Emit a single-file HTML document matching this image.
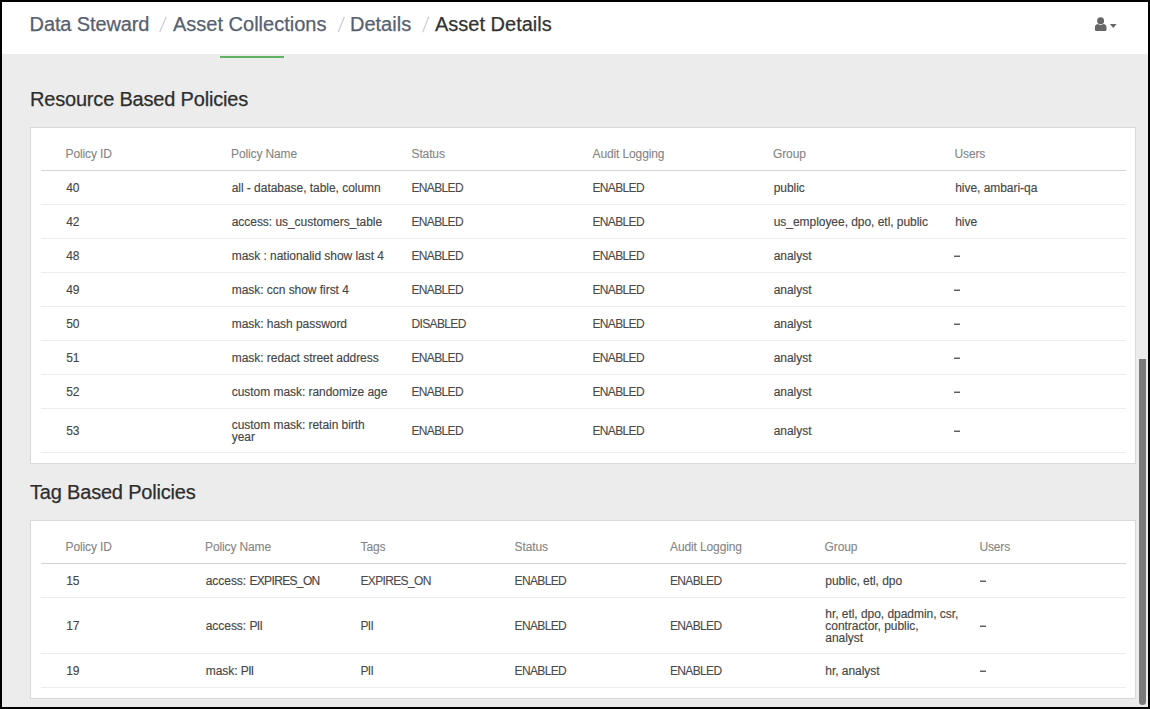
<!DOCTYPE html>
<html><head><meta charset="utf-8">
<style>
html,body{margin:0;padding:0;width:1150px;height:709px;overflow:hidden;background:#000;}
body{position:relative;font-family:"Liberation Sans",sans-serif;}
#frame{position:absolute;left:2px;top:2px;width:1146px;height:705px;background:#ececec;overflow:hidden;}
#hdr{position:absolute;left:2px;top:2px;width:1146px;height:52px;background:#fff;}
.bc{position:absolute;top:0;font-size:20px;line-height:20px;white-space:pre;color:#576070;-webkit-text-stroke:0.25px currentColor;}
.sl{position:absolute;top:0;font-size:20px;line-height:20px;color:#c4c7cc;}
#green{position:absolute;left:220px;top:56px;width:64px;height:2px;background:#62b266;}
.title{position:absolute;font-size:20px;line-height:20px;color:#2e2e2e;white-space:pre;letter-spacing:-0.19px;-webkit-text-stroke:0.25px currentColor;}
.card{position:absolute;left:30px;width:1104px;background:#fff;border:1px solid #d7d9dc;}
.th,.td{position:absolute;font-size:12px;line-height:12px;white-space:pre;}
.th{color:#858585;letter-spacing:-0.12px;-webkit-text-stroke:0.1px currentColor;}
.td{color:#464646;letter-spacing:-0.04px;-webkit-text-stroke:0.15px currentColor;}
.capw{letter-spacing:-0.65px;}
.cap{letter-spacing:-0.65px;color:#4a4a4a;-webkit-text-stroke:0.1px currentColor;}
.hl{position:absolute;left:41px;width:1085px;height:1px;background:#d4d4d4;}
.rl{position:absolute;left:41px;width:1085px;height:1px;background:#ededed;}
.dash{position:absolute;width:6px;height:2px;background:linear-gradient(#b4b4b4 50%,#606060 50%);}
#thumb{position:absolute;left:1139px;top:359px;width:7px;height:346px;background:#7a7a7a;border-radius:0 0 3.5px 3.5px;}
</style></head><body>
<div id="frame"></div>
<div id="hdr"></div>
<div class="bc" style="left:29.6px;top:14px;letter-spacing:-0.12px">Data Steward</div>
<div class="bc" style="left:173px;top:14px">Asset Collections</div>
<div class="bc" style="left:350px;top:14px">Details</div>
<div class="bc" style="left:435px;top:14px;color:#333">Asset Details</div>
<svg style="position:absolute;left:0;top:0" width="600" height="54">
<g stroke="#c9ccd1" stroke-width="1.2">
<line x1="166.3" y1="16.8" x2="159.7" y2="32.2"/>
<line x1="344.4" y1="16.8" x2="338.2" y2="32.2"/>
<line x1="428.8" y1="16.8" x2="422.7" y2="32.2"/>
</g></svg>
<svg style="position:absolute;left:1092px;top:15px" width="28" height="20" viewBox="0 0 28 20">
<path d="M2.9 14.6 L2.9 12.4 Q2.9 9 6.4 8.9 L11 8.9 Q14.5 9 14.5 12.4 L14.5 14.6 Q14.5 16.1 13.0 16.1 L4.4 16.1 Q2.9 16.1 2.9 14.6Z" fill="#666"/>
<circle cx="8.6" cy="5.8" r="4.1" fill="#fff"/>
<circle cx="8.6" cy="5.8" r="3.5" fill="#666"/>
<path d="M17.9 9 L24.6 9 L21.25 12.9 Z" fill="#666"/>
</svg>
<div id="green"></div>
<div class="title" style="left:30px;top:89px">Resource Based Policies</div>
<div class="title" style="left:30px;top:482px">Tag Based Policies</div>
<div class="card" style="top:127px;height:335px"></div>
<div class="card" style="top:520px;height:177px"></div>
<div class="th" style="left:65.5px;top:148px">Policy ID</div>
<div class="th" style="left:231px;top:148px">Policy Name</div>
<div class="th" style="left:411.5px;top:148px">Status</div>
<div class="th" style="left:592.5px;top:148px">Audit Logging</div>
<div class="th" style="left:773px;top:148px">Group</div>
<div class="th" style="left:954.5px;top:148px">Users</div>
<div class="hl" style="top:170px"></div>
<div class="td" style="left:66.2px;top:182.0px">40</div>
<div class="td" style="left:231.7px;top:182.0px">all - database, table, column</div>
<div class="td cap" style="left:411.5px;top:182.0px">ENABLED</div>
<div class="td cap" style="left:592.5px;top:182.0px">ENABLED</div>
<div class="td" style="left:773.7px;top:182.0px">public</div>
<div class="td" style="left:955.2px;top:182.0px">hive, ambari-qa</div>
<div class="rl" style="top:204px"></div>
<div class="td" style="left:66.2px;top:216.0px">42</div>
<div class="td" style="left:231.7px;top:216.0px">access: us_customers_table</div>
<div class="td cap" style="left:411.5px;top:216.0px">ENABLED</div>
<div class="td cap" style="left:592.5px;top:216.0px">ENABLED</div>
<div class="td" style="left:773.7px;top:216.0px">us_employee, dpo, etl, public</div>
<div class="td" style="left:955.2px;top:216.0px">hive</div>
<div class="rl" style="top:238px"></div>
<div class="td" style="left:66.2px;top:250.0px">48</div>
<div class="td" style="left:231.7px;top:250.0px">mask : nationalid show last 4</div>
<div class="td cap" style="left:411.5px;top:250.0px">ENABLED</div>
<div class="td cap" style="left:592.5px;top:250.0px">ENABLED</div>
<div class="td" style="left:773.7px;top:250.0px">analyst</div>
<div class="dash" style="left:954px;top:255px"></div>
<div class="rl" style="top:272px"></div>
<div class="td" style="left:66.2px;top:284.0px">49</div>
<div class="td" style="left:231.7px;top:284.0px">mask: ccn show first 4</div>
<div class="td cap" style="left:411.5px;top:284.0px">ENABLED</div>
<div class="td cap" style="left:592.5px;top:284.0px">ENABLED</div>
<div class="td" style="left:773.7px;top:284.0px">analyst</div>
<div class="dash" style="left:954px;top:289px"></div>
<div class="rl" style="top:306px"></div>
<div class="td" style="left:66.2px;top:318.0px">50</div>
<div class="td" style="left:231.7px;top:318.0px">mask: hash password</div>
<div class="td cap" style="left:411.5px;top:318.0px">DISABLED</div>
<div class="td cap" style="left:592.5px;top:318.0px">ENABLED</div>
<div class="td" style="left:773.7px;top:318.0px">analyst</div>
<div class="dash" style="left:954px;top:323px"></div>
<div class="rl" style="top:340px"></div>
<div class="td" style="left:66.2px;top:352.0px">51</div>
<div class="td" style="left:231.7px;top:352.0px">mask: redact street address</div>
<div class="td cap" style="left:411.5px;top:352.0px">ENABLED</div>
<div class="td cap" style="left:592.5px;top:352.0px">ENABLED</div>
<div class="td" style="left:773.7px;top:352.0px">analyst</div>
<div class="dash" style="left:954px;top:357px"></div>
<div class="rl" style="top:374px"></div>
<div class="td" style="left:66.2px;top:386.0px">52</div>
<div class="td" style="left:231.7px;top:386.0px">custom mask: randomize age</div>
<div class="td cap" style="left:411.5px;top:386.0px">ENABLED</div>
<div class="td cap" style="left:592.5px;top:386.0px">ENABLED</div>
<div class="td" style="left:773.7px;top:386.0px">analyst</div>
<div class="dash" style="left:954px;top:391px"></div>
<div class="rl" style="top:408px"></div>
<div class="td" style="left:66.2px;top:425.0px">53</div>
<div class="td" style="left:231.7px;top:418.5px">custom mask: retain birth<br>year</div>
<div class="td cap" style="left:411.5px;top:425.0px">ENABLED</div>
<div class="td cap" style="left:592.5px;top:425.0px">ENABLED</div>
<div class="td" style="left:773.7px;top:425.0px">analyst</div>
<div class="dash" style="left:954px;top:430px"></div>
<div class="rl" style="top:452px"></div>
<div class="th" style="left:65.5px;top:541px">Policy ID</div>
<div class="th" style="left:205px;top:541px">Policy Name</div>
<div class="th" style="left:360.5px;top:541px">Tags</div>
<div class="th" style="left:514.6px;top:541px">Status</div>
<div class="th" style="left:670px;top:541px">Audit Logging</div>
<div class="th" style="left:824.6px;top:541px">Group</div>
<div class="th" style="left:979.4px;top:541px">Users</div>
<div class="hl" style="top:563px"></div>
<div class="td" style="left:66.2px;top:575.0px">15</div>
<div class="td" style="left:205.7px;top:575.0px">access: <span class="capw">EXPIRES_ON</span></div>
<div class="td cap" style="left:360.5px;top:575.0px">EXPIRES_ON</div>
<div class="td cap" style="left:514.6px;top:575.0px">ENABLED</div>
<div class="td cap" style="left:670px;top:575.0px">ENABLED</div>
<div class="td" style="left:825.3px;top:575.0px">public, etl, dpo</div>
<div class="dash" style="left:980px;top:580px"></div>
<div class="rl" style="top:597px"></div>
<div class="td" style="left:66.2px;top:620.0px">17</div>
<div class="td" style="left:205.7px;top:620.0px">access: <span class="capw">PII</span></div>
<div class="td cap" style="left:360.5px;top:620.0px">PII</div>
<div class="td cap" style="left:514.6px;top:620.0px">ENABLED</div>
<div class="td cap" style="left:670px;top:620.0px">ENABLED</div>
<div class="td" style="left:825.3px;top:607.5px">hr, etl, dpo, dpadmin, csr,<br>contractor, public,<br>analyst</div>
<div class="dash" style="left:980px;top:625px"></div>
<div class="rl" style="top:653px"></div>
<div class="td" style="left:66.2px;top:665.0px">19</div>
<div class="td" style="left:205.7px;top:665.0px">mask: <span class="capw">PII</span></div>
<div class="td cap" style="left:360.5px;top:665.0px">PII</div>
<div class="td cap" style="left:514.6px;top:665.0px">ENABLED</div>
<div class="td cap" style="left:670px;top:665.0px">ENABLED</div>
<div class="td" style="left:825.3px;top:665.0px">hr, analyst</div>
<div class="dash" style="left:980px;top:670px"></div>
<div class="rl" style="top:687px"></div>
<div id="thumb"></div>
</body></html>
